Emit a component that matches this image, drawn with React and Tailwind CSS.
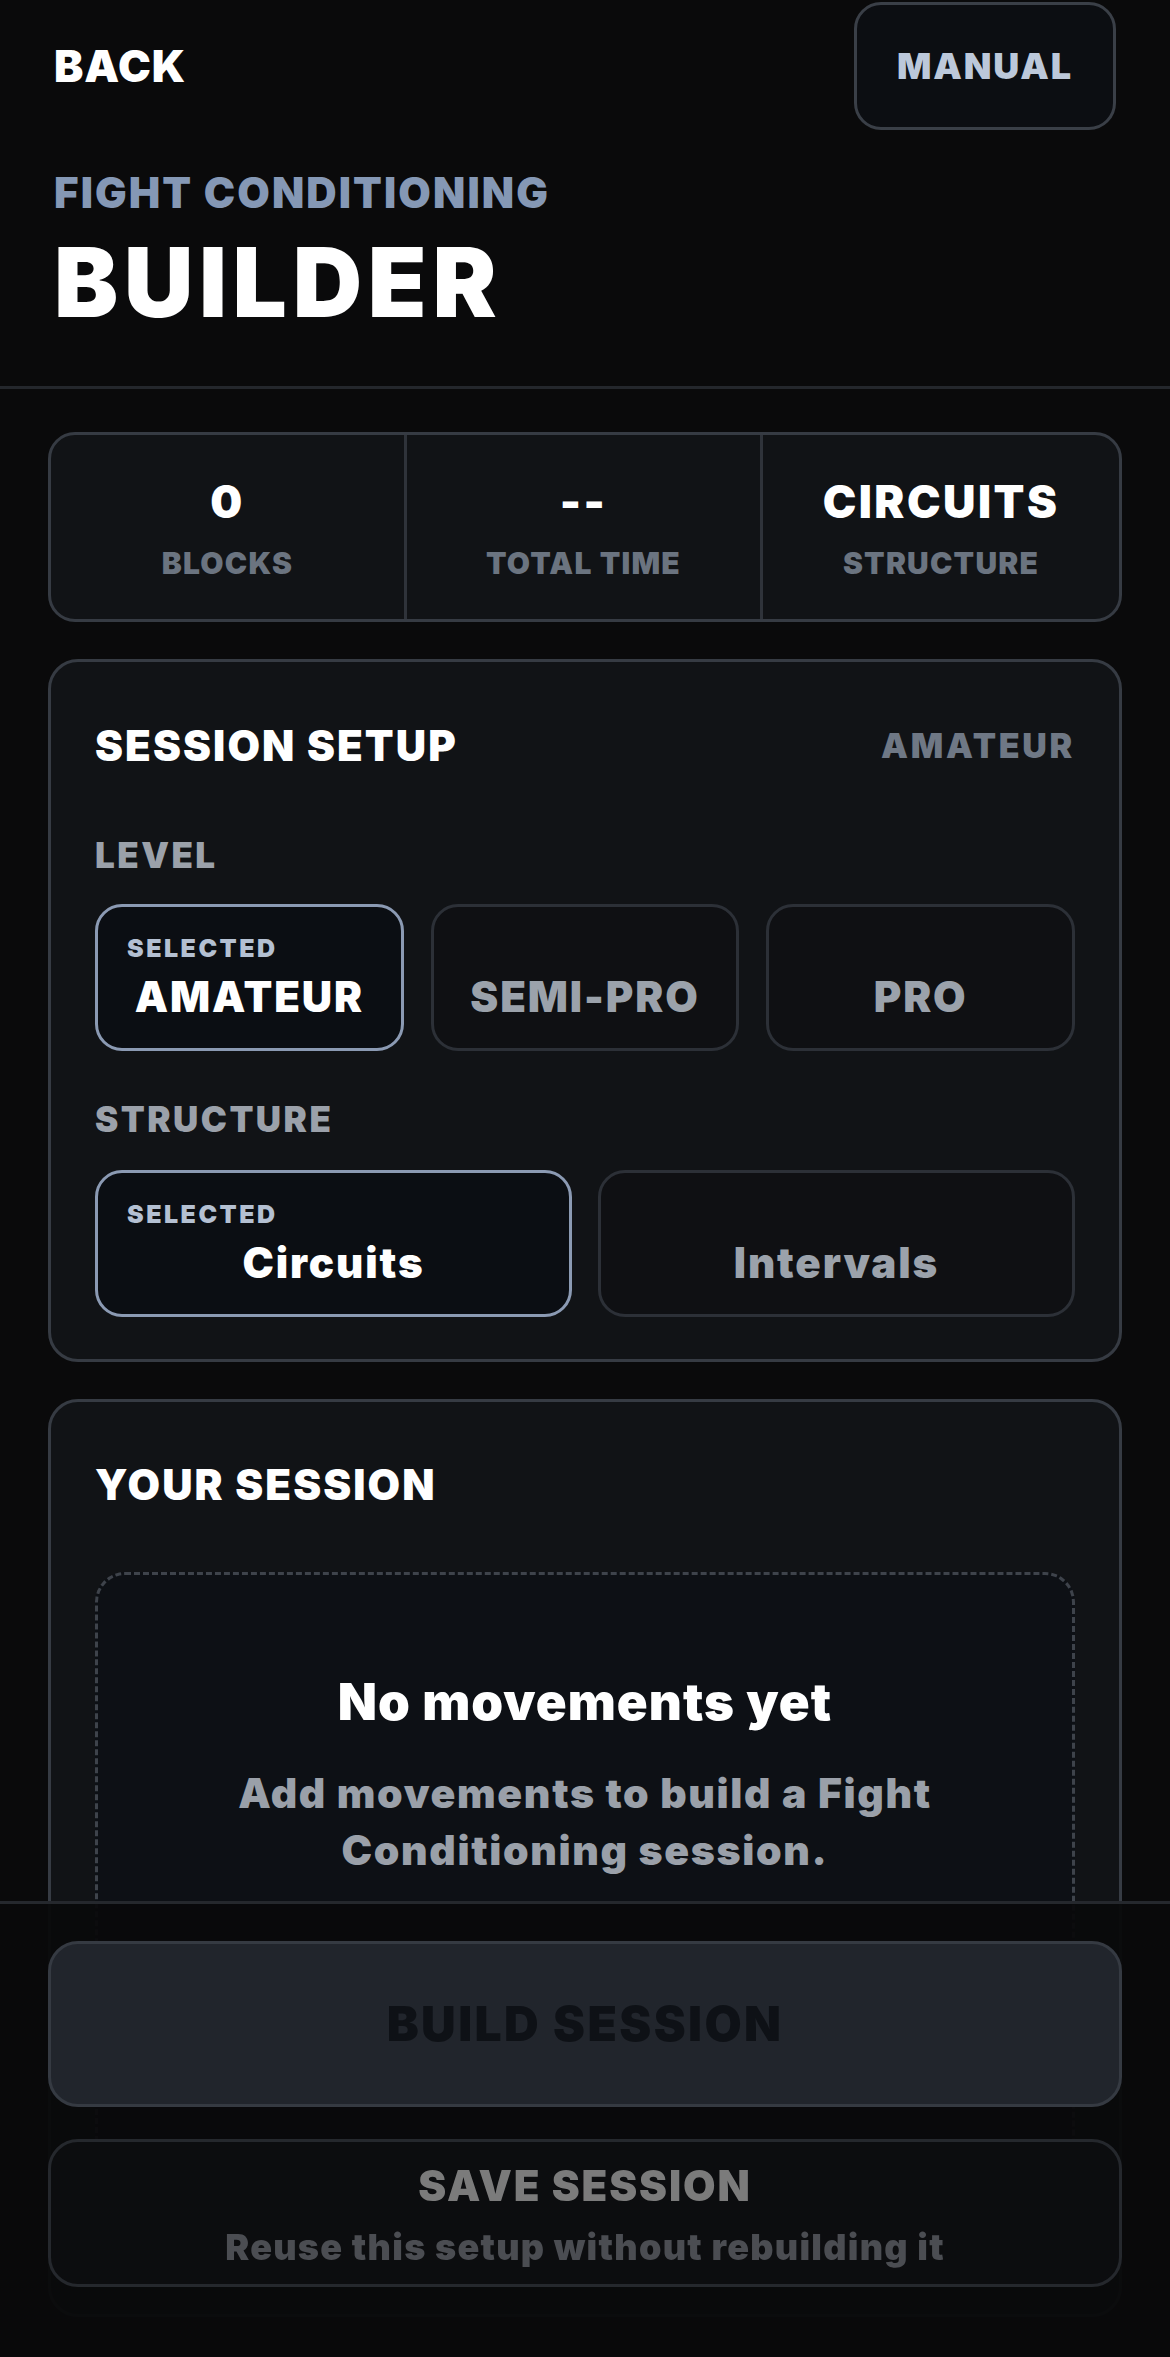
const levels = ['AMATEUR', 'SEMI-PRO', 'PRO']
const structures = ['Circuits', 'Intervals']

function Stat({ value, label }) {
  return (
    <div className="flex flex-col items-center pt-[44px] pb-[41px]">
      <div className="text-[45px] leading-none font-black text-white tracking-[0.055em]">{value}</div>
      <div className="mt-[24px] text-[30px] leading-none font-black text-[#6b7480] tracking-[0.04em]">{label}</div>
    </div>
  )
}

function Choice({ label, selected }) {
  return (
    <button
      className={`flex flex-col rounded-[27px] border-[3px] px-[29px] pt-[29px] pb-[30px] text-left ${
        selected ? 'border-[#8b9ab3] bg-[#0b0e13]' : 'border-[#2c3037] bg-[#0f1013]'
      }`}
    >
      <span
        className={`text-[25px] leading-none font-black tracking-[0.1em] text-[#b4c0d2] ${
          selected ? '' : 'invisible'
        }`}
      >
        SELECTED
      </span>
      <span
        className={`mt-[15px] self-center text-[42px] leading-none font-black tracking-[0.045em] ${
          selected ? 'text-white' : 'text-[#9ba2ab]'
        }`}
      >
        {label}
      </span>
    </button>
  )
}

export default function App() {
  return (
    <div className="h-screen overflow-hidden bg-[#0a0a0b] font-['Inter',sans-serif] antialiased">
      {/* Header */}
      <header className="border-b-[3px] border-[#24272c] px-[54px] pt-[2px] pb-[56px]">
        <div className="flex items-center justify-between">
          <button className="text-[44px] leading-none font-black text-white tracking-[0.02em]">BACK</button>
          <button className="flex h-[128px] w-[262px] items-center justify-center rounded-[27px] border-[3px] border-[#3a3f47] bg-[#0c0e12] text-[36px] leading-none font-black tracking-[0.05em] text-[#bcc8da]">
            MANUAL
          </button>
        </div>
        <div className="mt-[42px] text-[42px] leading-none font-black tracking-[0.05em] text-[#8598b5]">
          FIGHT CONDITIONING
        </div>
        <h1 className="mt-[20px] text-[96px] leading-none font-black tracking-[0.06em] text-white">BUILDER</h1>
      </header>

      <main className="flex flex-col gap-[37px] px-[48px] pt-[43px]">
        {/* Stats */}
        <div className="grid grid-cols-3 divide-x-[3px] divide-[#2f333a] rounded-[27px] border-[3px] border-[#363b43] bg-[#111316]">
          <Stat value="0" label="BLOCKS" />
          <Stat value="--" label="TOTAL TIME" />
          <Stat value="CIRCUITS" label="STRUCTURE" />
        </div>

        {/* Session setup */}
        <section className="rounded-[30px] border-[3px] border-[#363b43] bg-[#111316] px-[44px] pt-[63px] pb-[42px]">
          <div className="flex items-center justify-between">
            <h2 className="text-[42px] leading-none font-black tracking-[0.05em] text-white">SESSION SETUP</h2>
            <span className="text-[34px] leading-none font-black tracking-[0.08em] text-[#6f7885]">AMATEUR</span>
          </div>

          <div className="mt-[71px] text-[35px] leading-none font-black tracking-[0.07em] text-[#9ba1aa]">LEVEL</div>
          <div className="mt-[31px] grid grid-cols-3 gap-[27px]">
            {levels.map((l) => (
              <Choice key={l} label={l} selected={l === 'AMATEUR'} />
            ))}
          </div>

          <div className="mt-[51px] text-[35px] leading-none font-black tracking-[0.07em] text-[#9ba1aa]">STRUCTURE</div>
          <div className="mt-[33px] grid grid-cols-2 gap-[26px]">
            {structures.map((s) => (
              <Choice key={s} label={s} selected={s === 'Circuits'} />
            ))}
          </div>
        </section>

        {/* Your session */}
        <section className="rounded-[30px] border-[3px] border-[#363b43] bg-[#111316] px-[44px] pt-[62px] pb-[42px]">
          <h2 className="text-[42px] leading-none font-black tracking-[0.05em] text-white">YOUR SESSION</h2>
          <div className="mt-[66px] flex min-h-[700px] flex-col items-center rounded-[30px] border-[3px] border-dashed border-[#3e434b] bg-[#0d1015] px-[60px] pt-[101px] text-center">
            <div className="text-[51px] leading-none font-black tracking-[0.02em] text-white">No movements yet</div>
            <p className="mt-[38px] text-[41px] leading-[57px] font-black tracking-[0.04em] text-[#9aa0a9]">
              Add movements to build a Fight
              <br />
              Conditioning session.
            </p>
            <button className="mt-[196px] text-[36px] leading-none font-black tracking-[0.04em] text-[#6b7480]">
              ADD MOVEMENT
            </button>
          </div>
        </section>
      </main>

      {/* Bottom action bar */}
      <div className="fixed inset-x-0 bottom-0 flex flex-col gap-[32px] border-t-[3px] border-[#25282d] bg-[#0a0a0b]/95 px-[48px] pt-[37px] pb-[70px]">
        <button className="flex h-[166px] items-center justify-center rounded-[30px] border-[3px] border-[#353a42] bg-[#21252c] text-[48px] leading-none font-black tracking-[0.05em] text-[#0e1116]">
          BUILD SESSION
        </button>
        <button className="flex flex-col items-center rounded-[30px] border-[3px] border-[#25282d] bg-[#0c0d0f] pt-[23px] pb-[19px]">
          <span className="text-[42px] leading-none font-black tracking-[0.045em] text-[#7b7b7b]">SAVE SESSION</span>
          <span className="mt-[22px] text-[36px] leading-none font-black tracking-[0.035em] text-[#4b4d52]">
            Reuse this setup without rebuilding it
          </span>
        </button>
      </div>
    </div>
  )
}
